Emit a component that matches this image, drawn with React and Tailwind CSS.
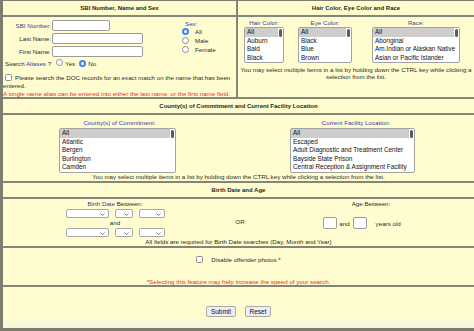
import React from 'react';

const LINE = 'border-[#858578]';

function Radio({ checked }) {
  if (checked) {
    return (
      <span className="inline-flex w-[7px] h-[7px] rounded-full bg-[#3d85f5] items-center justify-center shrink-0">
        <span className="w-[3px] h-[3px] rounded-full bg-white" />
      </span>
    );
  }
  return <span className="inline-block w-[7px] h-[7px] rounded-full border border-[#8c8c8c] bg-white shrink-0" />;
}

function Check() {
  return <span className="inline-block w-[7px] h-[7px] rounded-[1.5px] border border-[#8c8c8c] bg-white shrink-0 align-[-1px]" />;
}

function ListBox({ items, className, rowClass }) {
  return (
    <div className={`relative bg-white border border-[#a2a2a2] rounded-[2px] overflow-hidden text-[6.4px] text-[#111] ${className}`}>
      {items.map((item, i) => (
        <div
          key={item}
          className={`${rowClass} pl-[2px] whitespace-nowrap ${i === 0 ? 'bg-[#cdcdcd] mr-[5px]' : ''}`}
        >
          {item}
        </div>
      ))}
      <div className="absolute right-[1px] top-[1px] w-[3px] h-[8px] rounded-full bg-[#5c5c5c]" />
    </div>
  );
}

function DropSelect({ className }) {
  return (
    <div className={`relative h-[9px] bg-white border border-[#a8a8a8] rounded-[2px] ${className}`}>
      <svg className="absolute right-[3px] top-[2.5px] w-[5px] h-[3px]" viewBox="0 0 10 6">
        <path d="M1 1l4 4 4-4" stroke="#555" strokeWidth="1.6" fill="none" />
      </svg>
    </div>
  );
}

function TextBox({ className }) {
  return <div className={`bg-white border border-[#9c9c9c] rounded-[2px] ${className}`} />;
}

export default function App() {
  return (
    <div className="w-[474px] h-[331px] overflow-hidden bg-[#fffdd0] border-l-[3px] border-t border-b-[3px] border-[#7c7c6f] font-['Liberation_Sans',Arial,sans-serif] text-[6.2px] leading-[7px] text-[#2a2a2a]">
      {/* section headers: name / physical */}
      <div className={`flex h-[16px] border-b-2 ${LINE}`}>
        <div className={`w-[235px] border-r-2 ${LINE} flex items-center justify-center font-bold text-[6px] text-[#1e1e1e]`}>
          SBI Number, Name and Sex
        </div>
        <div className="flex-1 flex items-center justify-center font-bold text-[6px] text-[#1e1e1e]">
          Hair Color, Eye Color and Race
        </div>
      </div>

      <div className={`flex h-[82px] border-b-2 ${LINE}`}>
        <div className={`w-[235px] border-r-2 ${LINE} pt-[3px]`}>
          <div className="flex">
            <div className="w-[49px] text-right pr-[1px]">
              <div className="h-[11px] leading-[11px] mb-[2px] text-[#3a3aa6]">SBI Number:</div>
              <div className="h-[11px] leading-[11px] mb-[2px]">Last Name:</div>
              <div className="h-[11px] leading-[11px] mb-[2px]">First Name:</div>
            </div>
            <div>
              <TextBox className="w-[58px] h-[11px] mb-[2px]" />
              <TextBox className="w-[91px] h-[11px] mb-[2px]" />
              <TextBox className="w-[91px] h-[11px] mb-[2px]" />
            </div>
            <div className="ml-[39px]">
              <div className="h-[7px] pl-[3px] text-[#3a3aa6]">Sex:</div>
              <div className="h-[9px] flex items-center gap-[6px]"><Radio checked /><span>All</span></div>
              <div className="h-[9px] flex items-center gap-[6px]"><Radio /><span>Male</span></div>
              <div className="h-[9px] flex items-center gap-[6px]"><Radio /><span>Female</span></div>
            </div>
          </div>
          <div className="h-[8px] flex items-center pl-[2px]">
            <span>Search <span className="text-[#3a3aa6]">Aliases</span> ?</span>
            <span className="ml-[5px]"><Radio /></span>
            <span className="ml-[2px]">Yes</span>
            <span className="ml-[4px]"><Radio checked /></span>
            <span className="ml-[2px]">No</span>
          </div>
          <div className="mt-[7px] leading-[8px] whitespace-nowrap">
            <span className="ml-[2px] mr-[3px]"><Check /></span>
            Please search the DOC records for an exact match on the name that has been
            <br />
            entered.
          </div>
          <div className="text-[#e0302a] whitespace-nowrap">
            A single name alias can be entered into either the last name, or the first name field.
          </div>
        </div>

        <div className="flex-1 pt-[2px]">
          <div className="flex pl-[6px]">
            <div className="w-[40px] flex flex-col items-center">
              <div className="h-[7px] text-[#3a3aa6]">Hair Color:</div>
              <ListBox className="mt-[1px] w-[40px]" rowClass="h-[8.5px] leading-[8.5px]" items={['All', 'Auburn', 'Bald', 'Black']} />
            </div>
            <div className="ml-[14px] w-[54px] flex flex-col items-center">
              <div className="h-[7px] text-[#3a3aa6]">Eye Color:</div>
              <ListBox className="mt-[1px] w-[54px]" rowClass="h-[8.5px] leading-[8.5px]" items={['All', 'Black', 'Blue', 'Brown']} />
            </div>
            <div className="ml-[20px] w-[88px] flex flex-col items-center">
              <div className="h-[7px] text-[#3a3aa6]">Race:</div>
              <ListBox
                className="mt-[1px] w-[88px]"
                rowClass="h-[8.5px] leading-[8.5px]"
                items={['All', 'Aboriginal', 'Am.Indian or Alaskan Native', 'Asian or Pacific Islander']}
              />
            </div>
          </div>
          <div className="mt-[3px] text-center whitespace-nowrap">
            You may select multiple items in a list by holding down the CTRL key while clicking a
            <br />
            selection from the list.
          </div>
        </div>
      </div>

      {/* county / facility */}
      <div className={`h-[16px] border-b-2 ${LINE} flex items-center justify-center font-bold text-[6px] text-[#1e1e1e]`}>
        County(s) of Commitment and Current Facility Location
      </div>

      <div className={`h-[68px] border-b-2 ${LINE} pt-[4px]`}>
        <div className="flex">
          <div className="w-[235px] flex flex-col items-center">
            <div className="h-[7px] mr-[2px] text-[#3a3aa6]">County(s) of Commitment:</div>
            <ListBox
              className="mt-[2px] mr-[6px] w-[117px]"
              rowClass="h-[8.6px] leading-[8.6px]"
              items={['All', 'Atlantic', 'Bergen', 'Burlington', 'Camden']}
            />
          </div>
          <div className="flex-1 flex flex-col items-center">
            <div className="h-[7px] text-[#3a3aa6]">Current Facility Location:</div>
            <ListBox
              className="mt-[2px] mr-[7px] w-[125px]"
              rowClass="h-[8.6px] leading-[8.6px]"
              items={[
                'All',
                'Escaped',
                'Adult Diagnostic and Treatment Center',
                'Bayside State Prison',
                'Central Reception & Assignment Facility',
              ]}
            />
          </div>
        </div>
        <div className="text-center whitespace-nowrap">
          You may select multiple items in a list by holding down the CTRL key while clicking a selection from the list.
        </div>
      </div>

      {/* birth date / age */}
      <div className={`h-[16px] border-b-2 ${LINE} flex items-center justify-center font-bold text-[6px] text-[#1e1e1e]`}>
        Birth Date and Age
      </div>

      <div className={`h-[49px] border-b-2 ${LINE} pt-[1px]`}>
        <div className="flex">
          <div className="w-[224px] flex flex-col items-center">
            <div className="h-[7px]"><span className="text-[#3a3aa6]">Birth Date</span> Between:</div>
            <div className="mt-[2px] flex gap-[6px]">
              <DropSelect className="w-[43px]" />
              <DropSelect className="w-[18px]" />
              <DropSelect className="w-[26px]" />
            </div>
            <div className="h-[10px] leading-[10px]">and</div>
            <div className="flex gap-[6px]">
              <DropSelect className="w-[43px]" />
              <DropSelect className="w-[18px]" />
              <DropSelect className="w-[26px]" />
            </div>
          </div>
          <div className="w-[26px] text-center mt-[18px]">OR</div>
          <div className="flex-1 flex flex-col items-center">
            <div className="h-[7px] ml-[15px]">Age Between:</div>
            <div className="mt-[10px] mr-[3px] flex items-center">
              <TextBox className="w-[14px] h-[12px]" />
              <span className="ml-[2px] mr-[3px]">and</span>
              <TextBox className="w-[14px] h-[12px]" />
              <span className="ml-[9px]">years old</span>
            </div>
          </div>
        </div>
        <div className="mt-[1px] text-center">
          All fields are required for Birth Date searches (Day, Month and Year)
        </div>
      </div>

      {/* photos option */}
      <div className={`h-[39px] border-b-2 ${LINE} pt-[8px]`}>
        <div className="h-[7px] flex items-center justify-center">
          <Check />
          <span className="ml-[8px]">Disable offender photos *</span>
        </div>
        <div className="mt-[15px] text-center text-[#e0302a]">
          *Selecting this feature may help increase the speed of your search.
        </div>
      </div>

      {/* actions */}
      <div className="h-[41px] pt-[19px] flex justify-center bg-linear-to-b from-[#fffdd0] from-70% to-[#f5f6de]">
        <button className="w-[30px] h-[11px] bg-[#efefef] border border-[#a9a9a9] rounded-[2px] text-[6.5px] leading-[9px] text-[#111]">
          Submit
        </button>
        <button className="ml-[9px] w-[26px] h-[11px] bg-[#efefef] border border-[#a9a9a9] rounded-[2px] text-[6.5px] leading-[9px] text-[#111]">
          Reset
        </button>
      </div>
    </div>
  );
}
